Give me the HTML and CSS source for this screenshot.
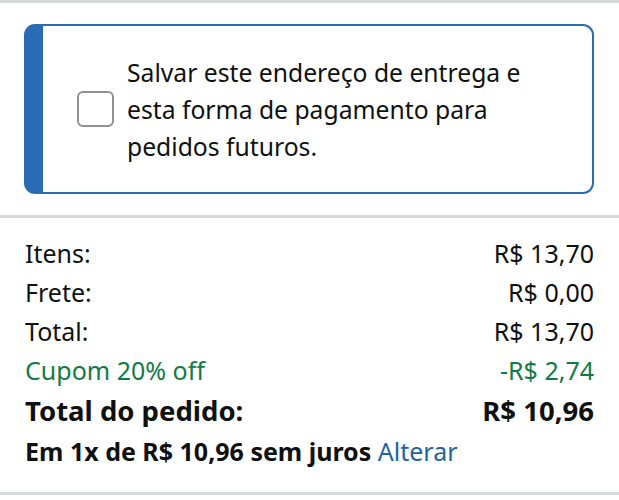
FILE: index.html
```html
<!DOCTYPE html>
<html lang="pt-BR">
<head>
<meta charset="utf-8">
<link rel="stylesheet" href="styles.css">
</head>
<body>
<div class="page">
  <div class="save-section">
    <div class="save-box">
      <label class="save-option">
        <span class="checkbox"></span>
        <span class="save-text">Salvar este endereço de entrega e esta forma de pagamento para pedidos futuros.</span>
      </label>
    </div>
  </div>
  <div class="summary">
    <div class="row"><span>Itens:</span><span>R$ 13,70</span></div>
    <div class="row"><span>Frete:</span><span>R$ 0,00</span></div>
    <div class="row"><span>Total:</span><span>R$ 13,70</span></div>
    <div class="row green"><span>Cupom 20% off</span><span>-R$ 2,74</span></div>
    <div class="row total"><span>Total do pedido:</span><span>R$ 10,96</span></div>
    <div class="installments">Em 1x de R$ 10,96 sem juros <a class="link" href="#">Alterar</a></div>
  </div>
</div>
</body>
</html>
```
FILE: styles.css
```css
html, body {
  margin: 0;
  padding: 0;
  background: #ffffff;
}
body {
  font-family: "Noto Sans", "Open Sans", sans-serif;
  color: #0f1111;
}
.page {
  width: 619px;
}
.save-section {
  border-top: 3px solid #d5d9d9;
  padding: 21px 25px 21px 24px;
}
.save-box {
  border: 2px solid #2a6cb3;
  border-left: 19px solid #2a6cb3;
  border-radius: 11px;
  box-sizing: border-box;
  height: 170px;
  display: flex;
  align-items: center;
  padding-left: 34px;
  padding-right: 10px;
}
.save-option {
  display: flex;
  align-items: center;
  gap: 13px;
}
.checkbox {
  flex: 0 0 auto;
  width: 37px;
  height: 36px;
  box-sizing: border-box;
  border: 2px solid #8d9096;
  border-radius: 6px;
  background: #fff;
}
.save-text {
  font-size: 24.7px;
  line-height: 37px;
  width: 425px;
}
.summary {
  border-top: 3px solid #d5d9d9;
  border-bottom: 3px solid #d5d9d9;
  padding: 16px 25px 20px 25px;
}
.row {
  display: flex;
  justify-content: space-between;
  font-size: 25px;
  line-height: 39px;
}
.green {
  color: #127a45;
}
.total {
  font-size: 27.5px;
  font-weight: 700;
  line-height: 41px;
}
.installments {
  font-size: 25px;
  font-weight: 700;
  line-height: 41px;
}
.link {
  color: #2162a1;
  font-weight: 400;
  text-decoration: none;
}
```
